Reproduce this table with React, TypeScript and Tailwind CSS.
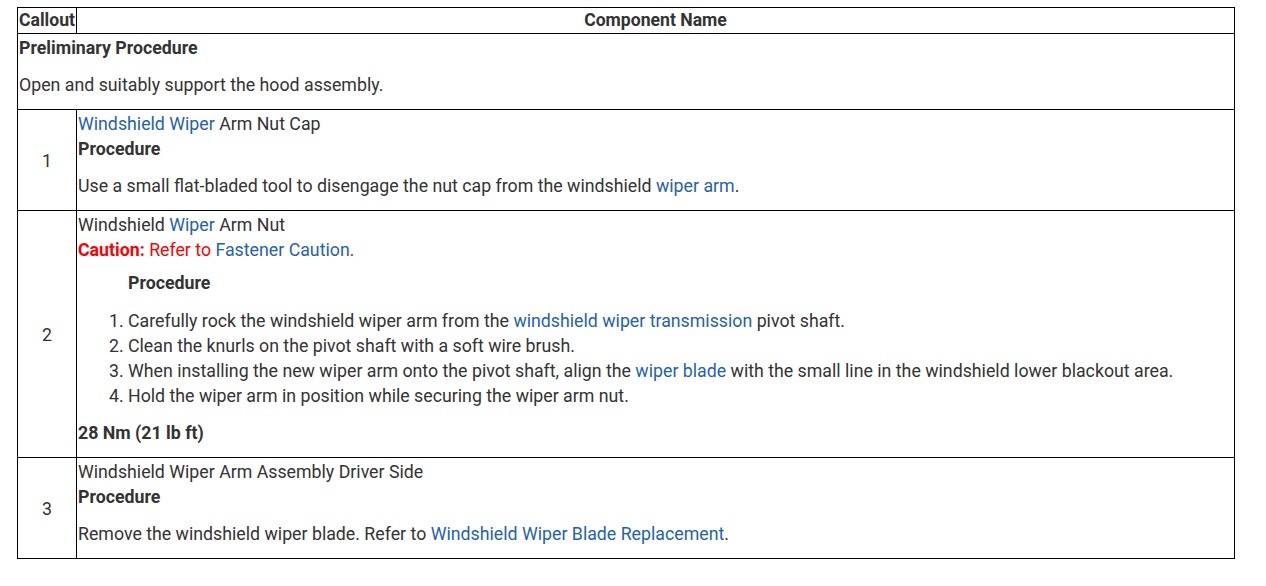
import React from "react";

const A = ({ children }: { children: React.ReactNode }) => (
  <span className="text-[#1f62b3]">{children}</span>
);

const cell = "border border-black px-[1px] pt-[2px] pb-0";

export default function App() {
  return (
    <div
      className="min-h-[586px] bg-white pl-[17px] pt-[7px] text-[17.75px] leading-[25px] text-[#333333]"
      style={{ fontFamily: "Roboto, 'Liberation Sans', sans-serif" }}
    >
      <table className="w-[1218px] border-collapse border border-black">
        <thead>
          <tr>
            <th className="w-[59px] border border-black px-[1px] py-0 text-left text-[17.6px] font-bold leading-[25px]">
              Callout
            </th>
            <th className="border border-black px-[1px] py-0 text-center text-[17.6px] font-bold leading-[25px]">
              Component Name
            </th>
          </tr>
        </thead>
        <tbody>
          <tr>
            <td colSpan={2} className={`${cell} align-top`}>
              <div className="font-bold">Preliminary Procedure</div>
              <p className="mt-[12px] mb-[11px]">Open and suitably support the hood assembly.</p>
            </td>
          </tr>
          <tr>
            <td className={`${cell} text-center align-middle`}>1</td>
            <td className={`${cell} align-top`}>
              <div>
                <A>Windshield Wiper</A> Arm Nut Cap
              </div>
              <div className="font-bold">Procedure</div>
              <p className="mt-[12px] mb-[11px]">
                Use a small flat-bladed tool to disengage the nut cap from the windshield{" "}
                <A>wiper arm</A>.
              </p>
            </td>
          </tr>
          <tr>
            <td className={`${cell} text-center align-middle`}>2</td>
            <td className={`${cell} align-top`}>
              <div>
                Windshield <A>Wiper</A> Arm Nut
              </div>
              <div>
                <span className="font-bold text-[#ff0000]">Caution:</span>{" "}
                <span className="text-[#ff0000]">Refer to</span> <A>Fastener Caution</A>
                <span className="text-[#ff0000]">.</span>
              </div>
              <div className="mt-[8px] pl-[50px] font-bold">Procedure</div>
              <ol className="mt-[13px] list-decimal pl-[50px]">
                <li>
                  Carefully rock the windshield wiper arm from the{" "}
                  <A>windshield wiper transmission</A> pivot shaft.
                </li>
                <li>Clean the knurls on the pivot shaft with a soft wire brush.</li>
                <li>
                  When installing the new wiper arm onto the pivot shaft, align the{" "}
                  <A>wiper blade</A> with the small line in the windshield lower blackout area.
                </li>
                <li>Hold the wiper arm in position while securing the wiper arm nut.</li>
              </ol>
              <p className="mt-[12px] mb-[11px] font-bold">28 Nm (21 lb ft)</p>
            </td>
          </tr>
          <tr>
            <td className={`${cell} text-center align-middle`}>3</td>
            <td className={`${cell} align-top`}>
              <div>Windshield Wiper Arm Assembly Driver Side</div>
              <div className="font-bold">Procedure</div>
              <p className="mt-[12px] mb-[11px]">
                Remove the windshield wiper blade. Refer to{" "}
                <A>Windshield Wiper Blade Replacement</A>.
              </p>
            </td>
          </tr>
        </tbody>
      </table>
    </div>
  );
}
